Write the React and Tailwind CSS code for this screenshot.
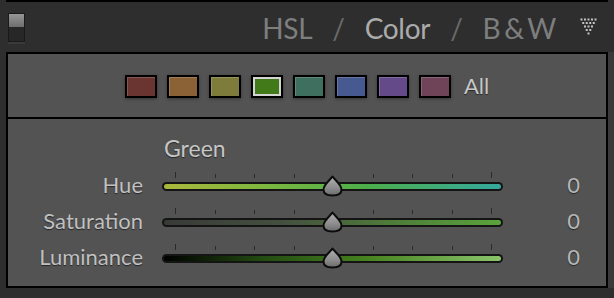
const swatches = [
  { name: 'Red', color: 'bg-[#6a3530]' },
  { name: 'Orange', color: 'bg-[#8b6136]' },
  { name: 'Yellow', color: 'bg-[#7e7c3b]' },
  { name: 'Green', color: 'bg-[#427a19]', active: true },
  { name: 'Aqua', color: 'bg-[#3f6f5f]' },
  { name: 'Blue', color: 'bg-[#465991]' },
  { name: 'Purple', color: 'bg-[#654a8a]' },
  { name: 'Magenta', color: 'bg-[#6f4358]' },
];

const sliders = [
  { label: 'Hue', value: 0, track: 'bg-[linear-gradient(90deg,#a9b83c_0%,#7db83f_30%,#4cae4a_60%,#35a89e_100%)]' },
  { label: 'Saturation', value: 0, track: 'bg-[linear-gradient(90deg,#383a37_0%,#44503f_35%,#4f7f3a_70%,#5aa33c_100%)]' },
  { label: 'Luminance', value: 0, track: 'bg-[linear-gradient(90deg,#000000_0%,#244d12_30%,#46821f_60%,#8cc46c_100%)]' },
];

const ticks = [13, 52.5, 92, 131.5, 210.5, 250, 289.5, 329];

const shadow = '[text-shadow:0_1px_1px_rgba(0,0,0,0.55)]';

function DotsIcon() {
  const rows = [5, 4, 3, 2, 1];
  return (
    <svg width="18" height="18" viewBox="0 0 18 18" className="shrink-0">
      {rows.map((n, r) =>
        Array.from({ length: n }).map((_, i) => (
          <rect
            key={`${r}-${i}`}
            x={0.5 + r * 1.75 + i * 3.5}
            y={0.5 + r * 3.5}
            width="2"
            height="2"
            fill="#c4c4c4"
          />
        ))
      )}
    </svg>
  );
}

function Thumb({ id }) {
  return (
    <svg width="21" height="22" viewBox="0 0 21 22" className="absolute top-[7px] left-[160px]">
      <defs>
        <linearGradient id={id} x1="0" y1="0" x2="0" y2="1">
          <stop offset="0" stopColor="#b0b0b0" />
          <stop offset="0.6" stopColor="#8c8c8c" />
          <stop offset="1" stopColor="#6a6a6a" />
        </linearGradient>
      </defs>
      <path
        d="M10.5 1.5 C13 5 19.5 9.5 19.5 14.5 C19.5 18.5 16 20.5 10.5 20.5 C5 20.5 1.5 18.5 1.5 14.5 C1.5 9.5 8 5 10.5 1.5 Z"
        fill={`url(#${id})`}
        stroke="#0c0c0c"
        strokeWidth="2"
        strokeLinejoin="round"
      />
    </svg>
  );
}

function Slider({ track, id }) {
  return (
    <div className="relative w-[341px] h-[36px] flex items-center">
      {ticks.map((t, i) => (
        <div
          key={t}
          className={`absolute w-px bg-[#2a2a2a] ${i === 0 || i === ticks.length - 1 ? 'top-[4px] h-[6px]' : 'top-[6px] h-[4px]'}`}
          style={{ left: t }}
        />
      ))}
      <div className="w-full h-[9px] rounded-full bg-[#141414] p-[2px]">
        <div className={`w-full h-full rounded-full ${track}`} />
      </div>
      <Thumb id={id} />
    </div>
  );
}

export default function App() {
  return (
    <div className="w-[614px] h-[298px] overflow-hidden bg-[#2e2e2e] font-['Lato','Liberation_Sans',sans-serif] select-none">
      <div className="mx-[6px] h-[2px] bg-black" />

      <header className="h-[50px] flex items-center pl-[8px] pr-[16px]">
        <div className="w-[17px] h-[29px] border border-[#1a1a1a] flex flex-col shadow-[0_2px_0_#3a3a3a]">
          <div className="h-[13px] bg-[linear-gradient(180deg,#969696,#6e6e6e)]" />
          <div className="flex-1 bg-[#272727]" />
        </div>
        <div className="ml-auto flex items-center gap-[20px] pt-[2px] text-[28px] leading-none tracking-[-0.3px]">
          <span className="text-[#7e7e7e]">HSL</span>
          <span className="text-[#6a6a6a]">/</span>
          <span className="text-[#ababab]">Color</span>
          <span className="text-[#6a6a6a]">/</span>
          <span className="text-[#7e7e7e] [word-spacing:-3px]">B &amp; W</span>
        </div>
        <div className="ml-[24px]">
          <DotsIcon />
        </div>
      </header>

      <div className="flex h-[236px]">
        <div className="w-[6px]" />
        <section className="w-[602px] border-2 border-black bg-[#535353] flex flex-col">
          <div className="h-[63px] flex items-center justify-center gap-[10px] pt-[1px]">
            {swatches.map((s) => (
              <div
                key={s.name}
                title={s.name}
                className={`w-[32px] h-[23px] border-2 border-black ${s.color} ${
                  s.active
                    ? 'shadow-[inset_0_0_0_2px_#d4d4d4,0_1px_3px_rgba(0,0,0,0.35)]'
                    : 'shadow-[inset_1px_1px_0_rgba(255,255,255,0.18),0_1px_3px_rgba(0,0,0,0.35)]'
                }`}
              />
            ))}
            <span className={`ml-[3px] text-[22px] leading-none text-[#c8c8c8] ${shadow}`}>All</span>
          </div>

          <div className="h-[2px] bg-black" />

          <div className="flex-1 flex flex-col pt-[15px]">
            <div className={`h-[28px] leading-[28px] pl-[156px] text-[23px] text-[#c6c6c6] ${shadow}`}>Green</div>
            <div className="mt-[6px] flex flex-col">
              {sliders.map((s, i) => (
                <div key={s.label} className="h-[36px] flex items-start">
                  <span className={`w-[135px] h-[36px] leading-[33px] text-right text-[22px] text-[#c0c0c0] ${shadow}`}>
                    {s.label}
                  </span>
                  <div className="ml-[19px]">
                    <Slider track={s.track} id={`thumb-${i}`} />
                  </div>
                  <span className={`w-[77px] h-[36px] leading-[33px] text-right text-[22px] text-[#b6b6b6] ${shadow}`}>
                    {s.value}
                  </span>
                </div>
              ))}
            </div>
          </div>
        </section>
        <div className="w-[6px] bg-[#3a3a3a]" />
      </div>
    </div>
  );
}
